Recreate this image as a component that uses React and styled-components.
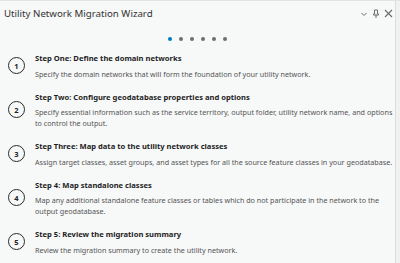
import React from 'react';
import styled, { createGlobalStyle } from 'styled-components';

const GlobalStyle = createGlobalStyle`
  html, body {
    margin: 0;
    padding: 0;
    background: #f7f8f8;
  }
`;

const Panel = styled.div`
  width: 400px;
  height: 263px;
  display: flex;
  background: #f7f8f8;
  border-top: 1px solid #e4e4e4;
  box-sizing: border-box;
  font-family: "Noto Sans", "Open Sans", sans-serif;
  color: #2b2b2b;
  overflow: hidden;
`;

const Content = styled.div`
  flex: 1;
  display: flex;
  flex-direction: column;
`;

const Gutter = styled.div`
  width: 4px;
  border-left: 1px solid #dcdcdc;
  background: #f1f1f1;
`;

const Header = styled.div`
  height: 25px;
  display: flex;
  align-items: center;
  justify-content: space-between;
  padding: 0 2px 0 4px;
`;

const Title = styled.div`
  font-size: 9.7px;
  color: #333;
`;

const HeaderIcons = styled.div`
  display: flex;
  align-items: center;
  gap: 4px;
  color: #6b6b6b;
`;

const Dots = styled.div`
  display: flex;
  justify-content: center;
  gap: 7px;
  margin-top: 9px;
  height: 8px;
  align-items: center;
`;

const Dot = styled.span`
  width: 4px;
  height: 4px;
  border-radius: 50%;
  background: ${p => (p.active ? '#0079c1' : '#6e6e6e')};
`;

const Steps = styled.div`
  display: flex;
  flex-direction: column;
  padding: 9px 0 0 8px;
  gap: 11px;
`;

const Step = styled.div`
  display: flex;
  align-items: center;
  gap: 10px;
`;

const Num = styled.div`
  width: 15px;
  height: 15px;
  flex: none;
  border: 1.5px solid #2a2a2a;
  border-radius: 50%;
  display: flex;
  align-items: center;
  justify-content: center;
  font-size: 7.5px;
  font-weight: 700;
  color: #222;
`;

const Body = styled.div`
  display: flex;
  flex-direction: column;
  gap: 4.5px;
`;

const StepTitle = styled.div`
  font-size: 7.6px;
  font-weight: 700;
  line-height: 12px;
  color: #1e1e1e;
`;

const Desc = styled.div`
  font-size: 7.2px;
  line-height: 11px;
  color: #555;
`;

const steps = [
  ['Step One: Define the domain networks', 'Specify the domain networks that will form the foundation of your utility network.'],
  ['Step Two: Configure geodatabase properties and options', 'Specify essential information such as the service territory, output folder, utility network name, and options to control the output.'],
  ['Step Three: Map data to the utility network classes', 'Assign target classes, asset groups, and asset types for all the source feature classes in your geodatabase.'],
  ['Step 4: Map standalone classes', 'Map any additional standalone feature classes or tables which do not participate in the network to the output geodatabase.'],
  ['Step 5: Review the migration summary', 'Review the migration summary to create the utility network.'],
];

function App() {
  return (
    <Panel>
      <GlobalStyle />
      <Content>
        <Header>
          <Title>Utility Network Migration Wizard</Title>
          <HeaderIcons>
            <svg width="8" height="8" viewBox="0 0 8 8">
              <path d="M1.5 3 L4 5.5 L6.5 3" fill="none" stroke="currentColor" strokeWidth="1" />
            </svg>
            <svg width="8" height="10" viewBox="0 0 8 10">
              <path d="M2.5 1 H5.5 V5 H6.5 V6 H1.5 V5 H2.5 Z M4 6 V9" fill="none" stroke="currentColor" strokeWidth="1" />
            </svg>
            <svg width="9" height="9" viewBox="0 0 9 9">
              <path d="M1 1 L8 8 M8 1 L1 8" fill="none" stroke="currentColor" strokeWidth="1.1" />
            </svg>
          </HeaderIcons>
        </Header>
        <Dots>
          {[0, 1, 2, 3, 4, 5].map(i => <Dot key={i} active={i === 0} />)}
        </Dots>
        <Steps>
          {steps.map(([t, d], i) => (
            <Step key={i}>
              <Num>{i + 1}</Num>
              <Body>
                <StepTitle>{t}</StepTitle>
                <Desc>{d}</Desc>
              </Body>
            </Step>
          ))}
        </Steps>
      </Content>
      <Gutter />
    </Panel>
  );
}

export default App;
